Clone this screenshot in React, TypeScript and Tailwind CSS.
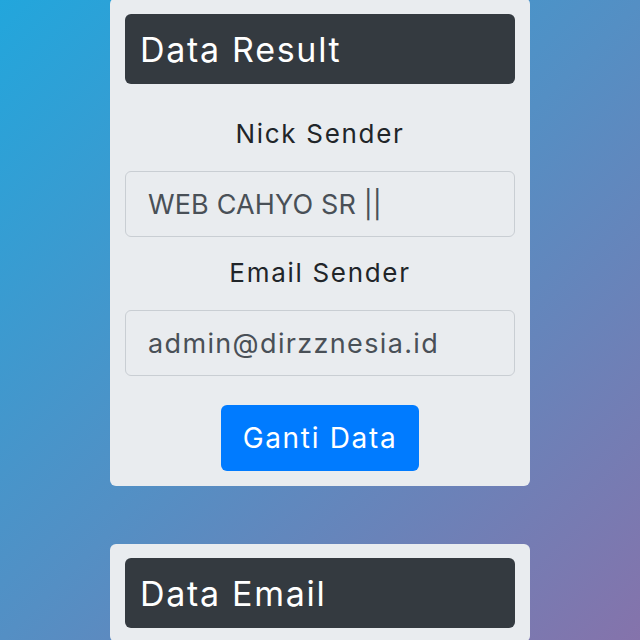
import { useState } from 'react'

const font = { fontFamily: 'Inter, "Noto Sans", sans-serif' }

function Field({ label, value, wide }: { label: string; value: string; wide?: boolean }) {
  return (
    <div className="flex flex-col">
      <label className="pt-4 pb-[17px] text-center text-[26px] leading-[40px] tracking-[0.065em] text-[#212529]">
        {label}
      </label>
      <input
        readOnly
        value={value}
        className={
          'h-[66px] w-full rounded-md border border-[#c9ced3] bg-[#e9ecef] px-[22px] text-[27px] text-[#495057] outline-none ' +
          (wide ? 'tracking-[0.05em]' : 'tracking-[0.005em]')
        }
        style={font}
      />
    </div>
  )
}

export default function App() {
  const [nick] = useState('WEB CAHYO SR ||')
  const [email] = useState('admin@dirzznesia.id')

  return (
    <div
      className="min-h-[640px] h-[640px] overflow-hidden bg-[linear-gradient(135deg,#22a6dc_0%,#548fc4_50%,#8573ab_100%)]"
      style={font}
    >
      <div className="mx-auto flex w-[420px] flex-col gap-[58px]">
        <div className="-mt-[2px] rounded-md bg-[#e9ecef] px-[15px] pt-[16px] pb-[15px]">
          <div className="mb-[14px] flex h-[70px] items-center rounded-md bg-[#343a40] px-[15px] text-[34px] tracking-[0.05em] text-white">
            Data Result
          </div>
          <Field label="Nick Sender" value={nick} />
          <Field label="Email Sender" value={email} wide />
          <div className="mt-[29px] flex justify-center">
            <button className="h-[66px] w-[198px] rounded-md bg-[#007bff] text-[28px] tracking-[0.06em] text-white">
              Ganti Data
            </button>
          </div>
        </div>

        <div className="rounded-md bg-[#e9ecef] px-[15px] py-[14px]">
          <div className="flex h-[70px] items-center rounded-md bg-[#343a40] px-[15px] text-[34px] tracking-[0.05em] text-white">
            Data Email
          </div>
        </div>
      </div>
    </div>
  )
}
